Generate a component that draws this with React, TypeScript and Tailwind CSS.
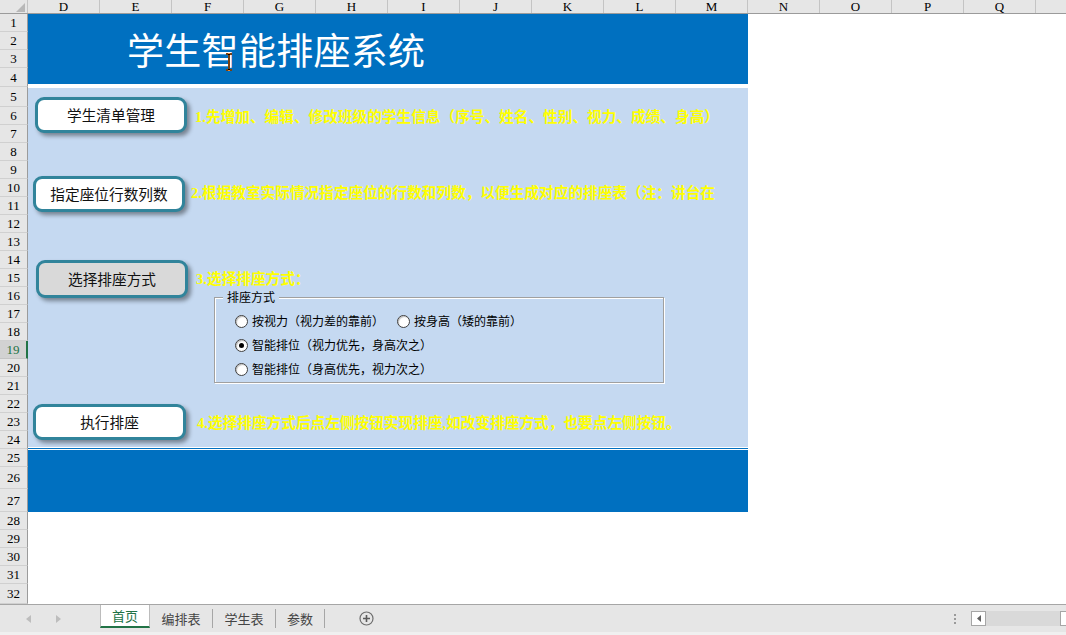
import React from "react";

const cols = ["D", "E", "F", "G", "H", "I", "J", "K", "L", "M", "N", "O", "P", "Q", ""];

const rows: { n: number; h: string }[] = [
  { n: 1, h: "h-[18px]" },
  { n: 2, h: "h-[18px]" },
  { n: 3, h: "h-[18px]" },
  { n: 4, h: "h-[19px]" },
  { n: 5, h: "h-[20px]" },
  { n: 6, h: "h-[18px]" },
  { n: 7, h: "h-[18px]" },
  { n: 8, h: "h-[18px]" },
  { n: 9, h: "h-[18px]" },
  { n: 10, h: "h-[18px]" },
  { n: 11, h: "h-[18px]" },
  { n: 12, h: "h-[18px]" },
  { n: 13, h: "h-[18px]" },
  { n: 14, h: "h-[18px]" },
  { n: 15, h: "h-[18px]" },
  { n: 16, h: "h-[18px]" },
  { n: 17, h: "h-[18px]" },
  { n: 18, h: "h-[18px]" },
  { n: 19, h: "h-[18px]" },
  { n: 20, h: "h-[18px]" },
  { n: 21, h: "h-[18px]" },
  { n: 22, h: "h-[18px]" },
  { n: 23, h: "h-[18px]" },
  { n: 24, h: "h-[18px]" },
  { n: 25, h: "h-[18px]" },
  { n: 26, h: "h-[22px]" },
  { n: 27, h: "h-[23px]" },
  { n: 28, h: "h-[18px]" },
  { n: 29, h: "h-[18px]" },
  { n: 30, h: "h-[18px]" },
  { n: 31, h: "h-[18px]" },
  { n: 32, h: "h-[20px]" },
];

const yellow =
  "whitespace-nowrap text-[14.67px] font-bold leading-none text-[#ffff00] font-['Liberation_Serif','Noto_Sans_CJK_SC',serif]";

function XButton({ label, size, gray }: { label: string; size: string; gray?: boolean }) {
  return (
    <div
      className={`flex shrink-0 items-center justify-center rounded-[9px] border-[3px] border-[#31849b] text-[14.67px] text-[#111] shadow-[3px_3px_4px_rgba(0,0,0,0.4)] ${size} ${
        gray ? "bg-[#d9d9d9]" : "bg-white"
      }`}
    >
      {label}
    </div>
  );
}

function Radio({ label, checked, width }: { label: string; checked?: boolean; width?: string }) {
  return (
    <div className={`flex items-center ${width ?? ""}`}>
      <div className="flex h-[13px] w-[13px] items-center justify-center rounded-full border border-[#404040] bg-white shadow-[inset_1px_1px_1px_rgba(0,0,0,0.25)]">
        {checked && <div className="h-[5px] w-[5px] rounded-full bg-black" />}
      </div>
      <span className="ml-[4px] whitespace-nowrap text-[12px] leading-none text-black">{label}</span>
    </div>
  );
}

export default function App() {
  return (
    <div className="flex h-[635px] w-[1066px] flex-col overflow-hidden bg-white font-['Noto_Sans_CJK_SC',sans-serif]">
      {/* column headers */}
      <div className="flex h-[14px] shrink-0 border-b border-[#9b9b9b] bg-[#e6e6e6]">
        <div className="relative h-full w-[28px] shrink-0 border-r border-[#c4c4c4]">
          <svg className="absolute bottom-[1px] right-[2px]" width="9" height="9" viewBox="0 0 9 9">
            <polygon points="9,0 9,9 0,9" fill="#b8b8b8" />
          </svg>
        </div>
        {cols.map((c, i) => (
          <div
            key={i}
            className="flex h-full w-[72px] shrink-0 items-center justify-center border-r border-[#c4c4c4] font-['Liberation_Serif',serif] text-[13px] leading-none text-black"
          >
            {c}
          </div>
        ))}
      </div>

      {/* body */}
      <div className="flex h-[590px] shrink-0 overflow-hidden">
        {/* row headers */}
        <div className="flex w-[28px] shrink-0 flex-col">
          {rows.map((r) => (
            <div
              key={r.n}
              className={`flex shrink-0 items-center justify-center border-b font-['Liberation_Serif',serif] text-[13px] leading-none ${r.h} ${
                r.n === 19
                  ? "border-b-[#c4c4c4] border-r-2 border-r-[#217346] bg-[#d2d2d2] text-[#217346]"
                  : "border-b-[#d0d0d0] border-r border-r-[#9b9b9b] bg-[#e6e6e6] text-black"
              }`}
            >
              {r.n}
            </div>
          ))}
        </div>

        {/* sheet */}
        <div className="flex w-[720px] shrink-0 flex-col">
          <div className="relative flex h-[70px] shrink-0 items-center bg-[#0070c0] pl-[99px]">
            <span className="whitespace-nowrap text-[37px] leading-none tracking-[0.3px] text-white">学生智能排座系统</span>
            <svg className="absolute left-[197px] top-[39px]" width="8" height="18" viewBox="0 0 8 18">
              <path d="M1 1 H3 L4 2 L5 1 H7 M4 2 V16 M1 17 H3 L4 16 L5 17 H7" stroke="#f08020" strokeWidth="2" fill="none" />
              <path d="M1 1 H3 L4 2 L5 1 H7 M4 2 V16 M1 17 H3 L4 16 L5 17 H7" stroke="#000" strokeWidth="1" fill="none" />
            </svg>
          </div>
          <div className="h-[4px] shrink-0 bg-white" />

          <div className="flex h-[359px] shrink-0 flex-col bg-[#c5d9f1]">
            <div className="mt-[9px] flex items-center pl-[7px]">
              <XButton label="学生清单管理" size="w-[152px] h-[36px]" />
              <span className={`ml-[8px] mt-[4px] ${yellow}`}>
                1.先增加、编辑、修改班级的学生信息（序号、姓名、性别、视力、成绩、身高）
              </span>
            </div>

            <div className="mt-[43px] flex items-center pl-[5px]">
              <XButton label="指定座位行数列数" size="w-[152px] h-[36px]" />
              <span className={`ml-[6px] mt-[-2px] ${yellow}`}>
                2.根据教室实际情况指定座位的行数和列数，以便生成对应的排座表（注：讲台在
              </span>
            </div>

            <div className="mt-[48px] flex items-start pl-[8px]">
              <XButton label="选择排座方式" size="w-[152px] h-[38px]" gray />
              <div className="ml-[8px] flex flex-col">
                <div className={`flex h-[38px] items-center ${yellow}`}>3.选择排座方式：</div>
                <div className="relative ml-[18px] mt-[-1px] flex h-[86px] w-[450px] flex-col border border-[#a0a0a0] pl-[20px] pt-[11px] shadow-[1px_1px_0_0_#ffffff,inset_1px_1px_0_0_#ffffff]">
                  <span className="absolute left-[8px] top-[-9px] bg-[#c5d9f1] px-[4px] text-[12px] leading-[16px] text-black">
                    排座方式
                  </span>
                  <div className="flex h-[24px] items-center">
                    <Radio label="按视力（视力差的靠前）" width="w-[162px]" />
                    <Radio label="按身高（矮的靠前）" />
                  </div>
                  <div className="flex h-[24px] items-center">
                    <Radio label="智能排位（视力优先，身高次之）" checked />
                  </div>
                  <div className="flex h-[24px] items-center">
                    <Radio label="智能排位（身高优先，视力次之）" />
                  </div>
                </div>
              </div>
            </div>

            <div className="mt-[21px] flex items-center pl-[5px]">
              <XButton label="执行排座" size="w-[153px] h-[36px]" />
              <span className={`ml-[11px] mt-[2px] ${yellow}`}>
                4.选择排座方式后点左侧按钮实现排座,如改变排座方式，也要点左侧按钮。
              </span>
            </div>
          </div>

          <div className="flex h-[3px] shrink-0 flex-col">
            <div className="h-[1px] bg-white" />
            <div className="h-[1px] bg-[#0070c0]" />
            <div className="h-[1px] bg-white" />
          </div>
          <div className="h-[62px] shrink-0 bg-[#0070c0]" />
        </div>
      </div>

      {/* sheet tabs bar */}
      <div className="flex h-[28px] shrink-0 items-start border-t border-[#a6a6a6] bg-[#e6e6e6]">
        <div className="flex h-[27px] w-[100px] shrink-0 items-center pl-[26px]">
          <svg width="5" height="8" viewBox="0 0 5 8">
            <polygon points="5,0 5,8 0,4" fill="#bdbdbd" />
          </svg>
          <svg className="ml-[25px]" width="5" height="8" viewBox="0 0 5 8">
            <polygon points="0,0 0,8 5,4" fill="#bdbdbd" />
          </svg>
        </div>
        <div className="flex h-[23px] w-[50px] shrink-0 items-center justify-center border-x border-b-2 border-x-[#bcbcbc] border-b-[#217346] bg-white text-[13px] leading-none text-[#217346]">
          首页
        </div>
        <div className="flex h-[27px] items-center">
          <div className="flex w-[62px] items-center justify-center text-[13px] leading-none text-[#444]">编排表</div>
          <div className="h-[19px] w-px bg-[#a6a6a6]" />
          <div className="flex w-[62px] items-center justify-center text-[13px] leading-none text-[#444]">学生表</div>
          <div className="h-[19px] w-px bg-[#a6a6a6]" />
          <div className="flex w-[48px] items-center justify-center text-[13px] leading-none text-[#444]">参数</div>
          <div className="h-[19px] w-px bg-[#a6a6a6]" />
          <svg className="ml-[34px]" width="15" height="15" viewBox="0 0 15 15">
            <circle cx="7.5" cy="7.5" r="6.5" fill="none" stroke="#6e6e6e" strokeWidth="1.2" />
            <path d="M7.5 4 V11 M4 7.5 H11" stroke="#5a5a5a" strokeWidth="1.6" />
          </svg>
        </div>
        <div className="flex-1" />
        <div className="flex h-[27px] items-center">
          <div className="flex flex-col gap-[2px]">
            <div className="h-[2px] w-[2px] bg-[#9a9a9a]" />
            <div className="h-[2px] w-[2px] bg-[#9a9a9a]" />
            <div className="h-[2px] w-[2px] bg-[#9a9a9a]" />
          </div>
          <div className="ml-[15px] flex h-[15px] w-[15px] items-center justify-center border border-[#a6a6a6] bg-white">
            <svg width="4" height="7" viewBox="0 0 4 7">
              <polygon points="4,0 4,7 0,3.5" fill="#606060" />
            </svg>
          </div>
          <div className="h-[15px] w-[74px] bg-[#d9d9d9]" />
          <div className="h-[15px] w-[6px] border-y border-l border-[#a6a6a6] bg-white" />
        </div>
      </div>
      <div className="h-[3px] shrink-0 bg-[#f0f0f0]" />
    </div>
  );
}
